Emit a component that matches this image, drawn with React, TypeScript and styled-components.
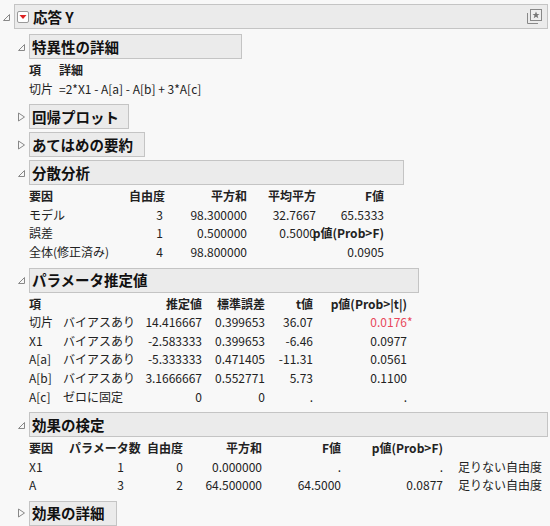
import React from "react";
import styled, { createGlobalStyle } from "styled-components";

const G = createGlobalStyle`
  body { margin: 0; background: #f8f8f8; font-family: "Noto Sans CJK JP", "Noto Sans", sans-serif; font-size: 12px; color: #222; }
`;

const Page = styled.div`padding: 4px 2px 0 2px; width: 546px;`;
const OutlineRow = styled.div`display: flex; align-items: center; gap: 3px;`;
const Header = styled.div<{ w?: number }>`
  box-sizing: border-box; height: 25px; ${(p) => (p.w ? `width: ${p.w}px;` : "flex: 1;")}
  background: #ebebeb; border: 1px solid #c4c4c4; display: flex; align-items: center;
  padding: 0 4px 0 2px; font-weight: bold; font-size: 14.5px; color: #111; gap: 4px; line-height: 20px;
`;
const Body = styled.div`padding-left: 15px;`;
const Section = styled.div`margin-bottom: 3px;`;
const Content = styled.div`padding: 2px 0 3px 12px;`;
const Grid = styled.div<{ cols: string }>`
  display: grid; grid-template-columns: ${(p) => p.cols}; grid-auto-rows: 18.6px; line-height: 18px; white-space: nowrap;
`;
const Cell = styled.div<{ r?: boolean; b?: boolean; red?: boolean; pl?: number; ml?: number }>`
  text-align: ${(p) => (p.r ? "right" : "left")};
  font-weight: ${(p) => (p.b ? "bold" : "normal")};
  color: ${(p) => (p.red ? "#e8475a" : "inherit")};
  padding-left: ${(p) => p.pl || 0}px;
  margin-left: ${(p) => p.ml || 0}px;
  overflow: visible;
`;
const Star = styled.span`display: inline-block; width: 0; overflow: visible;`;
const Spacer = styled.div`flex: 1;`;
const MenuBtn = styled.span`
  width: 10px; height: 10px; border: 1px solid #999; border-radius: 2px; background: #fff;
  display: inline-flex; align-items: center; justify-content: center;
`;
const Gap = styled.div`height: 5px;`;

const Tri = ({ open }: { open: boolean }) => (
  <svg width="9" height="10" viewBox="0 0 9 10">
    {open ? (
      <path d="M7.5 2.5 L7.5 8.5 L1.5 8.5 Z" fill="none" stroke="#888" />
    ) : (
      <path d="M1.5 1 L7.5 5 L1.5 9 Z" fill="none" stroke="#888" />
    )}
  </svg>
);

const Outline = ({ title, w, open = true, children }: any) => (
  <Section>
    <OutlineRow>
      <Tri open={open} />
      <Header w={w}>{title}</Header>
    </OutlineRow>
    {open && children && <Content>{children}</Content>}
  </Section>
);

const Row = ({ cells, r }: { cells: any[]; r: boolean[] }) => (
  <>
    {cells.map((c, i) =>
      typeof c === "object" && c && c.t !== undefined ? (
        <Cell key={i} r={r[i]} b={c.b} red={c.red} pl={c.pl} ml={c.ml}>{c.t}{c.star && <Star>*</Star>}</Cell>
      ) : (
        <Cell key={i} r={r[i]}>{c}</Cell>
      )
    )}
  </>
);

export default function App() {
  const ar = [false, true, true, true, true];
  const pr = [false, false, true, true, true, true];
  const er = [false, true, true, true, true, true, false];
  const hb = (t: string) => ({ t, b: true });
  return (
    <Page>
      <G />
      <OutlineRow>
        <Tri open />
        <Header>
          <MenuBtn>
            <svg width="8" height="6" viewBox="0 0 8 6"><path d="M0.5 1 L7.5 1 L4 5 Z" fill="#d22" /></svg>
          </MenuBtn>
          応答 Y
          <Spacer />
          <svg width="18" height="18" viewBox="0 0 18 18">
            <rect x="5.5" y="1.5" width="11" height="11" fill="#eee" stroke="#888" />
            <path d="M2.5 5 L2.5 15.5 L13 15.5" fill="none" stroke="#888" />
            <path d="M11 3.5 L12 6 L14.5 6 L12.5 7.6 L13.3 10.2 L11 8.7 L8.7 10.2 L9.5 7.6 L7.5 6 L10 6 Z" fill="#777" />
          </svg>
        </Header>
      </OutlineRow>
      <Body>
        <Gap />
        <Outline title="特異性の詳細" w={213}>
          <Grid cols="30px auto">
            <Row cells={[hb("項"), hb("詳細")]} r={[false, false]} />
            <Row cells={["切片", "=2*X1 - A[a] - A[b] + 3*A[c]"]} r={[false, false]} />
          </Grid>
        </Outline>
        <Outline title="回帰プロット" w={100} open={false} />
        <Outline title="あてはめの要約" w={116} open={false} />
        <Outline title="分散分析" w={375}>
          <Grid cols="100px 34px 84px 69px 68px">
            <Row cells={[hb("要因"), hb("自由度"), hb("平方和"), hb("平均平方"), hb("F値")]} r={ar} />
            <Row cells={["モデル", "3", "98.300000", "32.7667", "65.5333"]} r={ar} />
            <Row cells={["誤差", "1", "0.500000", "0.5000", { t: "p値(Prob>F)", b: true, ml: -8 }]} r={ar} />
            <Row cells={["全体(修正済み)", "4", "98.800000", "", "0.0905"]} r={ar} />
          </Grid>
        </Outline>
        <Outline title="パラメータ推定値" w={390}>
          <Grid cols="34px 78px 61px 63px 48px 94px">
            <Row cells={[hb("項"), "", hb("推定値"), hb("標準誤差"), hb("t値"), hb("p値(Prob>|t|)")]} r={pr} />
            <Row cells={["切片", "バイアスあり", "14.416667", "0.399653", "36.07", { t: "0.0176", red: true, star: true }]} r={pr} />
            <Row cells={["X1", "バイアスあり", "-2.583333", "0.399653", "-6.46", "0.0977"]} r={pr} />
            <Row cells={["A[a]", "バイアスあり", "-5.333333", "0.471405", "-11.31", "0.0561"]} r={pr} />
            <Row cells={["A[b]", "バイアスあり", "3.1666667", "0.552771", "5.73", "0.1100"]} r={pr} />
            <Row cells={["A[c]", "ゼロに固定", "0", "0", ".", "."]} r={pr} />
          </Grid>
        </Outline>
        <Outline title="効果の検定">
          <Grid cols="40px 55px 59px 79px 79px 102px auto">
            <Row cells={[hb("要因"), hb("パラメータ数"), hb("自由度"), hb("平方和"), hb("F値"), hb("p値(Prob>F)"), ""]} r={er} />
            <Row cells={["X1", "1", "0", "0.000000", ".", ".", { t: "足りない自由度", pl: 15 }]} r={er} />
            <Row cells={["A", "3", "2", "64.500000", "64.5000", "0.0877", { t: "足りない自由度", pl: 15 }]} r={er} />
          </Grid>
        </Outline>
        <Outline title="効果の詳細" w={88} open={false} />
      </Body>
    </Page>
  );
}
